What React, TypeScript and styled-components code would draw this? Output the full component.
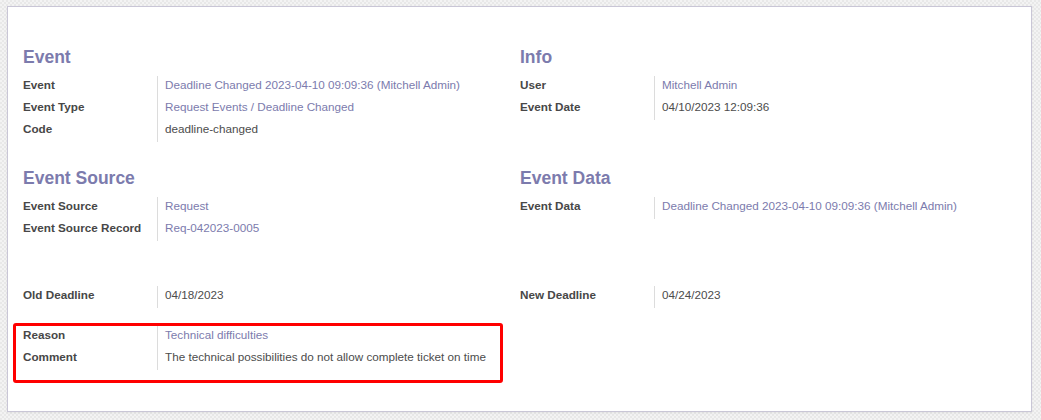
import React from "react";
import styled, { createGlobalStyle } from "styled-components";

const GlobalStyle = createGlobalStyle`
  html, body {
    margin: 0;
    padding: 0;
  }
  body {
    font-family: "Liberation Sans", Arial, sans-serif;
    background-color: #efefef;
    background-image: repeating-conic-gradient(#e8e8e8 0 25%, #f3f3f3 0 50%);
    background-size: 4px 4px;
  }
`;

const Page = styled.div`
  padding: 6px 9px 8px 7px;
  width: 1041px;
  height: 420px;
  box-sizing: border-box;
`;

const Sheet = styled.div`
  background: #ffffff;
  border: 1px solid #c9c6d6;
  box-shadow: 0 1px 2px rgba(0, 0, 0, 0.06);
  padding: 38px 14px 41px 15px;
  box-sizing: border-box;
  height: 406px;
`;

const Section = styled.div<{ $gap: number }>`
  position: relative;
  display: grid;
  grid-template-columns: 1fr 1fr;
  margin-top: ${(p) => p.$gap}px;
`;

const Group = styled.div`
  display: flex;
  flex-direction: column;
`;

const Heading = styled.div`
  font-size: 17.5px;
  font-weight: 700;
  line-height: 24px;
  height: 24px;
  color: #7c7bad;
  margin-bottom: 7px;
`;

const Rows = styled.div`
  display: grid;
  grid-template-columns: 134px 1fr;
`;

const Label = styled.div`
  font-size: 11.7px;
  font-weight: 700;
  color: #474747;
  line-height: 17px;
  height: 22px;
  padding-bottom: 5px;
  box-sizing: border-box;
  white-space: nowrap;
`;

const Value = styled.div<{ $link?: boolean }>`
  font-size: 11.7px;
  color: ${(p) => (p.$link ? "#7c7bad" : "#4c4c4c")};
  line-height: 17px;
  height: 22px;
  padding: 0 0 5px 7px;
  box-sizing: border-box;
  border-left: 1px solid #dcdcdc;
  white-space: nowrap;
`;

const Highlight = styled.div`
  position: absolute;
  left: -10px;
  top: -3px;
  width: 490px;
  height: 60px;
  border: 3px solid #ff0000;
  border-radius: 3px;
  box-sizing: border-box;
  pointer-events: none;
`;

type Field = { label: string; value: string; link?: boolean };

const FieldGroup: React.FC<{ title?: string; fields: Field[] }> = ({
  title,
  fields,
}) => (
  <Group>
    {title && <Heading>{title}</Heading>}
    <Rows>
      {fields.map((f) => (
        <React.Fragment key={f.label}>
          <Label>{f.label}</Label>
          <Value $link={f.link}>{f.value}</Value>
        </React.Fragment>
      ))}
    </Rows>
  </Group>
);

export default function App() {
  return (
    <>
      <GlobalStyle />
      <Page>
        <Sheet>
          <Section $gap={0}>
            <FieldGroup
              title="Event"
              fields={[
                {
                  label: "Event",
                  value: "Deadline Changed 2023-04-10 09:09:36 (Mitchell Admin)",
                  link: true,
                },
                {
                  label: "Event Type",
                  value: "Request Events / Deadline Changed",
                  link: true,
                },
                { label: "Code", value: "deadline-changed" },
              ]}
            />
            <FieldGroup
              title="Info"
              fields={[
                { label: "User", value: "Mitchell Admin", link: true },
                { label: "Event Date", value: "04/10/2023 12:09:36" },
              ]}
            />
          </Section>
          <Section $gap={24}>
            <FieldGroup
              title="Event Source"
              fields={[
                { label: "Event Source", value: "Request", link: true },
                {
                  label: "Event Source Record",
                  value: "Req-042023-0005",
                  link: true,
                },
              ]}
            />
            <FieldGroup
              title="Event Data"
              fields={[
                {
                  label: "Event Data",
                  value: "Deadline Changed 2023-04-10 09:09:36 (Mitchell Admin)",
                  link: true,
                },
              ]}
            />
          </Section>
          <Section $gap={45}>
            <FieldGroup
              fields={[{ label: "Old Deadline", value: "04/18/2023" }]}
            />
            <FieldGroup
              fields={[{ label: "New Deadline", value: "04/24/2023" }]}
            />
          </Section>
          <Section $gap={18}>
            <FieldGroup
              fields={[
                {
                  label: "Reason",
                  value: "Technical difficulties",
                  link: true,
                },
                {
                  label: "Comment",
                  value:
                    "The technical possibilities do not allow complete ticket on time",
                },
              ]}
            />
            <div />
            <Highlight />
          </Section>
        </Sheet>
      </Page>
    </>
  );
}
